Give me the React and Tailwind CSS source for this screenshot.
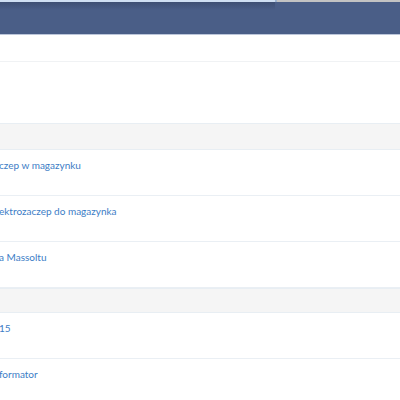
// Lista zgłoszeń – widok przewinięty w poziomie
const groups = [
  { band: "h-[27px]", rows: ["czep w magazynku", "ektrozaczep do magazynka", "a Massoltu"] },
  { band: "h-[25px]", rows: ["15", "formator"] },
];

function Row({ label }) {
  return (
    <div className="h-[46px] border-b border-[#eaeff4] bg-white pt-[9px]">
      <a className="block text-[10px] leading-[12px] text-[#3c7dc6] -ml-px">{label}</a>
    </div>
  );
}

export default function App() {
  return (
    <div className="w-[400px] h-[400px] overflow-hidden bg-white" style={{ fontFamily: "Lato, 'Open Sans', sans-serif" }}>
      {/* pasek okna nad nagłówkiem */}
      <div className="flex h-[2px]">
        <div className="w-[275px] bg-[#cfdff2]" />
        <div className="w-[2px] bg-[#9db3cf]" />
        <div className="flex-1 bg-[#c3c3c3]" />
      </div>

      {/* nagłówek */}
      <div className="h-[33px] bg-[#4a5e87] border-b border-[#bcc6da]">
        <div className="w-[275px] h-[8px] bg-gradient-to-b from-[#3e4f73] to-transparent" />
      </div>

      {/* pasek filtrów */}
      <div className="h-[27px] border-b border-[#f0f2f4]" />
      <div className="h-[61px]" />

      {groups.map((g, i) => (
        <div key={i}>
          <div className={`${g.band} bg-[#f5f5f5] border-y border-[#e8eef3]`} />
          {g.rows.map((r) => (
            <Row key={r} label={r} />
          ))}
        </div>
      ))}
    </div>
  );
}
